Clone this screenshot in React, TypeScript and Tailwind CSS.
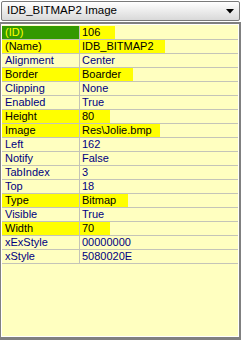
type Prop = {
  name: string;
  value: string;
  mark?: "id" | "hot";
  w?: number;
};

const props: Prop[] = [
  { name: "(ID)", value: "106", mark: "id", w: 35 },
  { name: "(Name)", value: "IDB_BITMAP2", mark: "hot", w: 85 },
  { name: "Alignment", value: "Center" },
  { name: "Border", value: "Boarder", mark: "hot", w: 53 },
  { name: "Clipping", value: "None" },
  { name: "Enabled", value: "True" },
  { name: "Height", value: "80", mark: "hot", w: 30 },
  { name: "Image", value: "Res\\Jolie.bmp", mark: "hot", w: 80 },
  { name: "Left", value: "162" },
  { name: "Notify", value: "False" },
  { name: "TabIndex", value: "3" },
  { name: "Top", value: "18" },
  { name: "Type", value: "Bitmap", mark: "hot", w: 48 },
  { name: "Visible", value: "True" },
  { name: "Width", value: "70", mark: "hot", w: 30 },
  { name: "xExStyle", value: "00000000" },
  { name: "xStyle", value: "5080020E" },
];

function Row({ p }: { p: Prop }) {
  const labelCls =
    p.mark === "id"
      ? "bg-[#339900] text-[#ffff00]"
      : p.mark === "hot"
        ? "bg-[#ffff00] text-black"
        : "text-[#000080]";
  const valueCls = p.mark ? "bg-[#ffff00] text-black" : "text-[#000080]";
  return (
    <div className="flex h-[14px] border-b border-[#c4c4b8]">
      <div className={`w-[77px] shrink-0 pl-[3px] leading-[13px] ${labelCls}`}>{p.name}</div>
      <div className="w-px shrink-0 bg-[#c4c4b8]" />
      <div className="flex-1">
        <div
          className={`pl-[2px] leading-[13px] h-[13px] ${valueCls}`}
          style={p.w ? { width: p.w } : undefined}
        >
          {p.value}
        </div>
      </div>
    </div>
  );
}

export default function App() {
  return (
    <div className="w-[241px] h-[340px] bg-white flex flex-col text-[11px] font-['Liberation_Sans',Arial,sans-serif]">
      <div className="mx-px mt-px h-[20px] border border-[#7a7a7a] rounded-[2px] bg-gradient-to-b from-white to-[#d9d9d9] flex items-center pl-[5px] pr-[5px]">
        <span className="flex-1 text-black text-[11.5px] leading-none">IDB_BITMAP2 Image</span>
        <svg width="8" height="5" viewBox="0 0 8 5">
          <path d="M0 0h8L4 4.5z" fill="#000" />
        </svg>
      </div>
      <div className="mt-px flex-1 border-t-2 border-l border-r-2 border-b-[3px] border-[#808080]">
        <div className="h-full border border-white bg-[#ffffc0] pt-px">
          {props.map((p) => (
            <Row key={p.name} p={p} />
          ))}
        </div>
      </div>
    </div>
  );
}
